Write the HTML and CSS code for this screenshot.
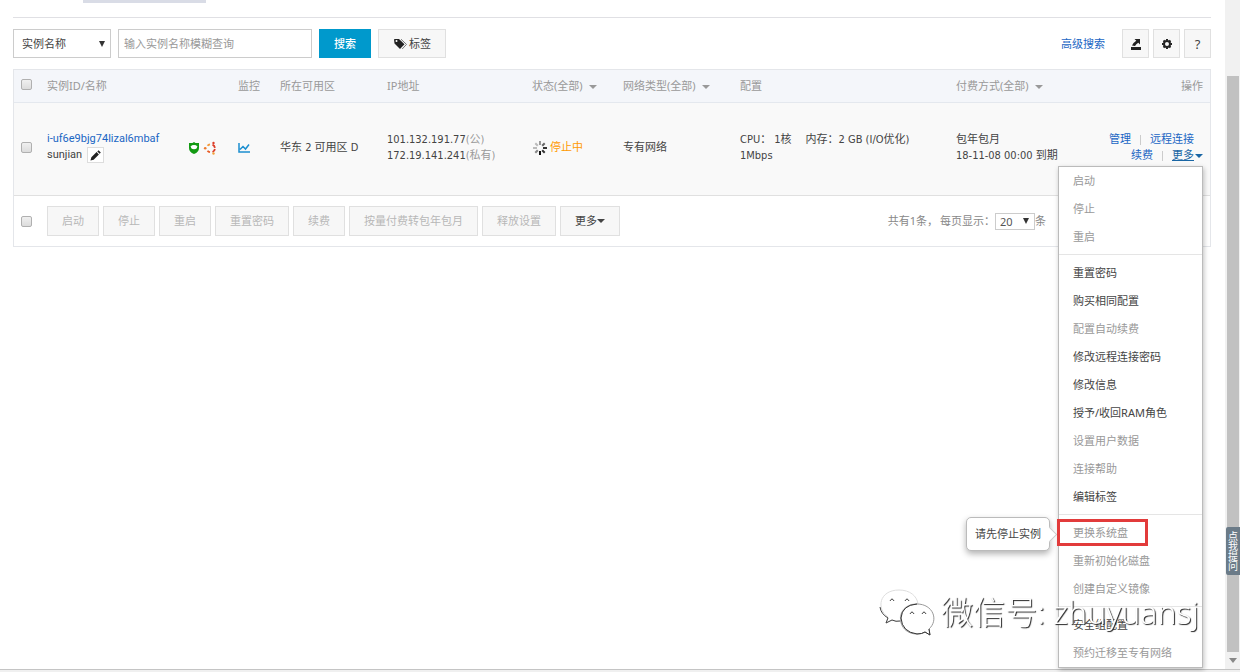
FILE: index.html
```html
<!DOCTYPE html>
<html lang="zh-CN">
<head>
<meta charset="utf-8">
<title>实例列表</title>
<link rel="stylesheet" href="styles.css">
</head>
<body>
<div class="view">
  <main class="main">
    <div class="tabs"><span class="tab-mark"></span></div>
    <form class="toolbar">
      <span class="select field-select">
        <select aria-label="搜索字段"><option>实例名称</option></select>
        <svg class="select-arrow" viewBox="0 0 6 6"><path d="M0 0h6L3 6z"/></svg>
      </span>
      <input class="search" type="text" aria-label="搜索" placeholder="输入实例名称模糊查询">
      <button class="btn primary" type="button">搜索</button>
      <button class="btn tag-btn" type="button">
        <svg class="tag-icon" viewBox="0 0 14 12"><path d="M0 1.500Q0 1 1 1h4l5.500 5.300L6 11 .5 5.500z" fill="#222"/><circle cx="2.500" cy="3" r="1" fill="#fff"/><path d="M7 1.200l5.500 5.200L8.200 11" fill="none" stroke="#777"/></svg>标签
      </button>
      <a class="advanced" href="#">高级搜索</a>
      <div class="tools">
        <button class="btn icon-btn" type="button" aria-label="导出"><svg viewBox="0 0 12 12"><path d="M1 9h10v3H1zM4.500 1H10v5.500L8.300 4.800Q6 6 5 8L2 7.500Q3.500 4.500 6.300 2.800z" fill="#222"/></svg></button>
        <button class="btn icon-btn" type="button" aria-label="设置"><svg viewBox="0 0 12 12"><circle cx="6" cy="6" r="3" fill="none" stroke="#222" stroke-width="2"/><path d="M6 1v1.500M6 9.500V11M1 6h1.500M9.500 6H11M2.500 2.500l1 1M8.500 8.500l1 1M9.500 2.500l-1 1M3.500 8.500l-1 1" stroke="#222" stroke-width="2"/></svg></button>
        <button class="btn icon-btn help" type="button">?</button>
      </div>
    </form>

    <section class="panel">
      <table class="list">
        <colgroup><col class="c-check"><col class="c-name"><col class="c-mon"><col class="c-zone"><col class="c-ip"><col class="c-state"><col class="c-net"><col class="c-conf"><col class="c-act"></colgroup>
        <thead>
          <tr>
            <th class="check"><input type="checkbox" aria-label="全选"></th>
            <th>实例ID/名称</th><th>监控</th><th>所在可用区</th><th>IP地址</th>
            <th>状态(全部)<i class="caret spaced"></i></th>
            <th>网络类型(全部)<i class="caret spaced"></i></th>
            <th>配置</th>
            <th><div class="head-last"><span>付费方式(全部)<i class="caret spaced"></i></span><span>操作</span></div></th>
          </tr>
        </thead>
        <tbody>
          <tr>
            <td class="check"><input type="checkbox" aria-label="选择实例"></td>
            <td>
              <div class="instance">
                <div class="names">
                  <a href="#">i-uf6e9bjg74lizal6mbaf</a>
                  <div class="alias">sunjian<button class="edit" type="button" aria-label="编辑"><svg viewBox="0 0 12 12"><path d="M.5 11.500l1-3.500 5.700-5.700 2.500 2.500L4 10.500zM8 1.500L9.300.3l2.500 2.400-1.300 1.300z" fill="#222"/></svg></button></div>
                </div>
                <div class="badges">
                  <svg class="shield" viewBox="0 0 12 12"><path d="M6 0l1.500 1H11v5Q11 10 6 12 1 10 1 6V1h3.500z" fill="#139a13"/><path d="M3 4.200Q3.500 3 6 3q2.500 0 3 1.200Q9.500 7 6 7.200 2.500 7 3 4.200z" fill="#fff"/></svg>
                  <svg class="ubuntu" viewBox="0 0 14 14"><g fill="none" stroke-width="1.800"><path d="M4.500 4.800A4 4 0 0 1 7 3.300" stroke="#f39a3c"/><path d="M9.500 3.600A4 4 0 0 1 11.900 6.800" stroke="#dc3d28"/><path d="M11.900 8A4 4 0 0 1 9.500 11" stroke="#dc3d28"/><path d="M7 11.200A4 4 0 0 1 4.500 9.700" stroke="#e95b24"/></g><circle cx="2.200" cy="7.200" r="1.300" fill="#ee7a2c"/><circle cx="10.500" cy="1.900" r="1.200" fill="#dc3d28"/><circle cx="10.500" cy="12.500" r="1.200" fill="#f1a33c"/></svg>
                </div>
              </div>
            </td>
            <td><svg class="chart" viewBox="0 0 12 10"><path d="M1 0v9h11M2 6.500l3-3 2.500 2.500L11 1.500" fill="none" stroke="#1c8fd0" stroke-width="1.500"/></svg></td>
            <td>华东 2 可用区 D</td>
            <td>101.132.191.77<span class="muted">(公)</span><br>172.19.141.241<span class="muted">(私有)</span></td>
            <td>
              <span class="state"><svg class="spin" viewBox="0 0 16 16" stroke-width="2"><path d="M8 11v4" stroke="#111"/><path d="M10.200 10.200l2.500 2.500M11 8h4" stroke="#333"/><path d="M10.200 5.800l2.500-2.500" stroke="#666"/><path d="M8 5V1" stroke="#999"/><path d="M5.800 5.800L3.300 3.300M5 8H1" stroke="#bbb"/><path d="M5.800 10.200l-2.500 2.500" stroke="#888"/></svg>停止中</span>
            </td>
            <td>专有网络</td>
            <td><div class="spec"><span>CPU： 1核</span><span>内存：2 GB (I/O优化)</span></div>1Mbps</td>
            <td>
              <div class="last">
                <div>包年包月<br>18-11-08 00:00 到期</div>
                <div class="actions">
                  <div class="line first"><a href="#">管理</a><i class="bar"></i><a href="#">远程连接</a></div>
                  <div class="line"><a href="#">续费</a><i class="bar"></i>
                    <div class="more"><a class="open" href="#">更多</a><i class="caret"></i>
                      <ul class="menu">
                        <li class="off">启动</li><li class="off">停止</li><li class="off">重启</li>
                        <li class="divider"></li>
                        <li>重置密码</li><li>购买相同配置</li><li class="off">配置自动续费</li><li>修改远程连接密码</li><li>修改信息</li><li>授予/收回RAM角色</li><li class="off">设置用户数据</li><li class="off">连接帮助</li><li>编辑标签</li>
                        <li class="divider"></li>
                        <li class="off marked">更换系统盘<span class="tip">请先停止实例</span></li><li class="off">重新初始化磁盘</li><li class="off">创建自定义镜像</li>
                        <li class="divider"></li>
                        <li>安全组配置</li><li class="off">预约迁移至专有网络</li>
                      </ul>
                    </div>
                  </div>
                </div>
              </div>
            </td>
          </tr>
        </tbody>
      </table>
      <footer class="batch">
        <input class="batch-check" type="checkbox" aria-label="全选">
        <div class="batch-buttons">
          <button class="btn" disabled>启动</button><button class="btn" disabled>停止</button><button class="btn" disabled>重启</button><button class="btn" disabled>重置密码</button><button class="btn" disabled>续费</button><button class="btn" disabled>按量付费转包年包月</button><button class="btn" disabled>释放设置</button><button class="btn" type="button">更多<i class="caret"></i></button>
        </div>
        <label class="paging"><span>共有1条，</span><span class="per">每页显示：</span><span class="select size-select"><select><option>20</option></select><svg class="select-arrow" viewBox="0 0 6 6"><path d="M0 0h6L3 6z"/></svg></span>条</label>
      </footer>
    </section>
  </main>
  <aside class="scroll"><div class="thumb"></div><svg class="down" viewBox="0 0 8 5"><path d="M0 0h8L4 5z" fill="#888"/></svg></aside>
</div>
<div class="base"></div>
<button class="ask" type="button">点我提问</button>
<div class="watermark">
  <svg viewBox="0 0 56 48" fill="#fff" stroke-width="1"><path d="M7 35l2-6C-3 21 0 2 20 2c11 0 18 6 19 14C27 15 19 24 22 33q-5 1-9-1z" stroke="#ddd"/><path d="M1 19q1 7 8 11l-2 5 6-3q4 2 8 1" fill="none" stroke="#444"/><path d="M38 16C15 17 17 46 38 46q5 0 8-2l5 3-1-6C60 32 54 16 38 16z" stroke="#999"/><path d="M38 16Q23 17 22 30q1 14 16 16 5 0 8-2l5 3-1-6" fill="none" stroke="#333"/><path d="M11 13q2-4 4 0M26 13q2-4 4 0M31 26q2-4 4 0M43 26q2-4 4 0" fill="none" stroke="#444"/></svg>
  <span>微信号: zhuyuansj</span>
</div>
</body>
</html>
```
FILE: styles.css
```css
* { box-sizing: border-box; }
body {
  margin: 0;
  min-height: 100vh;
  display: flex;
  flex-direction: column;
  background: #fff;
  color: #444;
  font: 11px/16px "Noto Sans", "Noto Sans CJK SC", sans-serif;
}
button, input, select { font: inherit; color: inherit; margin: 0; border-radius: 0; }
a { color: #1a66c4; text-decoration: none; }
svg { display: block; flex: none; }

.view { flex: 1; display: flex; }
.main { flex: 1; min-width: 0; padding: 0 14px 0 13px; }
.base { height: 3px; background: #f0f0f0; border-top: 1px solid #c4c4c4; }

.tabs { height: 18px; padding-left: 70px; border-bottom: 1px solid #e0e0e4; }
.tab-mark { display: block; width: 123px; height: 3px; background: #d9dce6; }

.toolbar { display: flex; align-items: center; margin: 11px 0; }
.btn {
  display: inline-flex;
  align-items: center;
  justify-content: center;
  height: 30px;
  padding: 0 14px;
  border: 1px solid #e0e0e0;
  background: #f7f7f7;
  white-space: nowrap;
}
.btn:disabled { color: #b8b8b8; }
.toolbar .btn { height: 29px; }
.toolbar .primary { padding: 0 15px; background: #0099cc; border: 0; color: #fff; width: 52px; font-weight: 500; }
.tag-btn { margin-left: 7px; }
.tag-icon { width: 16px; height: 12px; }
.select { position: relative; display: inline-flex; }
.select select { appearance: none; width: 100%; border: 1px solid #ccc; background: #fff; outline: 0; }
.select-arrow { position: absolute; right: 6px; top: 50%; width: 6px; height: 6px; margin-top: -3px; fill: #333; pointer-events: none; }
.field-select { width: 98px; }
.field-select select { height: 29px; padding: 0 8px; }
.search { width: 194px; height: 29px; margin: 0 7px; padding: 0 5px; border: 1px solid #ccc; background: #fff; }
.search::placeholder { color: #999; }
.advanced { margin-left: auto; }
.tools { display: flex; gap: 4px; margin-left: 17px; }
.tools .icon-btn { width: 27px; padding: 0; }
.icon-btn svg { width: 12px; height: 12px; }
.help { font-size: 13px; }

.panel { border: 1px solid #e4e6ea; }
.list { width: 100%; table-layout: fixed; border-collapse: separate; border-spacing: 0; }
.c-check { width: 33px; }
.c-name { width: 191px; }
.c-mon { width: 42px; }
.c-zone { width: 107px; }
.c-ip { width: 145px; }
.c-state { width: 91px; }
.c-net { width: 117px; }
.c-conf { width: 216px; }
th, td { padding: 0; text-align: left; white-space: nowrap; }
th { height: 33px; background: #f4f6fa; border-bottom: 1px solid #e4e8ee; color: #999; font-weight: 400; }
td { height: 93px; padding-bottom: 2px; background: #f9f9f9; border-bottom: 1px solid #e0e0e0; font-family: "DejaVu Sans Condensed", "Noto Sans CJK SC", sans-serif; }
.list .check { padding: 0 0 4px 7px; }
input[type="checkbox"] {
  appearance: none;
  display: block;
  width: 11px;
  height: 11px;
  border: 1px solid #b0b0b0;
  border-radius: 2px;
  background: linear-gradient(#f0f0f0, #dcdcdc);
}
.caret { display: inline-block; border: 4px solid transparent; border-top-color: currentColor; border-bottom: 0; vertical-align: middle; }
.spaced { margin-left: 6px; }
.head-last, .last { display: flex; justify-content: space-between; padding-right: 7px; }
.muted { color: #999; }

.instance { display: flex; align-items: center; font-family: Roboto, sans-serif; }
.names { width: 141px; padding-bottom: 2px; }
.names > a { display: block; }
.alias { display: flex; align-items: center; gap: 5px; height: 16px; }
.edit { width: 17px; height: 16px; padding: 1px 2px; border: 1px solid #ddd; background: #fff; }
.edit svg { width: 11px; height: 11px; }
.badges { display: flex; align-items: center; gap: 3px; }
.shield { width: 12px; height: 12px; }
.ubuntu { width: 14px; height: 14px; }
.chart { width: 12px; height: 10px; }
.state { display: flex; align-items: center; gap: 2px; color: #f90; }
.spin { width: 16px; height: 16px; }
.spec { display: flex; gap: 14px; }

.actions { display: flex; flex-direction: column; align-items: flex-end; }
.line { display: flex; align-items: center; }
.first { padding-right: 9px; }
.bar { width: 1px; height: 10px; margin: 0 9px; background: #ccc; }
.more { position: relative; display: flex; align-items: center; gap: 1px; color: #1a66a4; }
.open { color: #1a66a4; text-decoration: underline; }
.menu {
  position: absolute;
  z-index: 2;
  right: 0;
  top: calc(100% + 2px);
  width: 145px;
  margin: 0;
  padding: 0;
  list-style: none;
  border: 1px solid #bbb;
  background: #fff;
  box-shadow: 1px 2px 5px rgba(0, 0, 0, .25);
  color: #444;
  font-family: "Noto Sans", "Noto Sans CJK SC", sans-serif;
}
.menu li { height: 28px; padding-left: 14px; line-height: 28px; }
.menu .off { color: #999; }
.menu .divider { height: 1px; margin: 3px 0 4px; background: #e5e5e5; }
.menu .marked { position: relative; }
.marked::after { content: ""; position: absolute; left: -2px; top: 0; width: 91px; height: 27px; box-sizing: border-box; border: 3px solid #e23b3b; }
.tip {
  position: absolute;
  right: calc(100% + 9px);
  top: -2px;
  padding: 0 8px;
  height: 34px;
  line-height: 32px;
  border: 1px solid #bbb;
  border-radius: 5px;
  background: #fff;
  color: #444;
  box-shadow: 0 3px 6px rgba(0, 0, 0, .3);
}
.tip::after { content: ""; position: absolute; right: -6px; top: 11px; width: 10px; height: 10px; border: 1px solid #ccc; border-left: 0; border-bottom: 0; background: #fff; transform: rotate(45deg); }

.batch { display: flex; align-items: center; padding: 10px 164px 10px 7px; }
.batch-check { margin-right: 15px; }
.batch-buttons { display: flex; gap: 4px; }
.paging { display: flex; align-items: center; margin-left: auto; color: #888; white-space: nowrap; }
.per { margin-left: 2px; }
.size-select { width: 40px; color: #555; }
.size-select select { height: 17px; padding: 0 4px; }

.scroll { width: 15px; display: flex; flex-direction: column; align-items: center; padding: 76px 1px 0; background: #f1f1f1; }
.thumb { flex: 1; width: 12px; background: #c1c1c1; }
.down { width: 8px; height: 5px; margin: 6px 0; }
.ask {
  position: fixed;
  right: 0;
  top: 527px;
  width: 14px;
  padding: 4px 1px;
  border: 0;
  border-radius: 2px 0 0 2px;
  background: #6b7b88;
  color: #fff;
  font-size: 10px;
  line-height: 10px;
  white-space: normal;
  word-break: break-all;
}
.watermark {
  position: fixed;
  z-index: 3;
  right: 41px;
  bottom: 36px;
  display: flex;
  align-items: center;
  gap: 6px;
  color: #fff;
  font-size: 32px;
  line-height: 48px;
  font-weight: 300;
  text-shadow: 1px 1px 1px #222;
  pointer-events: none;
}
.watermark svg { width: 56px; height: 48px; }
```
